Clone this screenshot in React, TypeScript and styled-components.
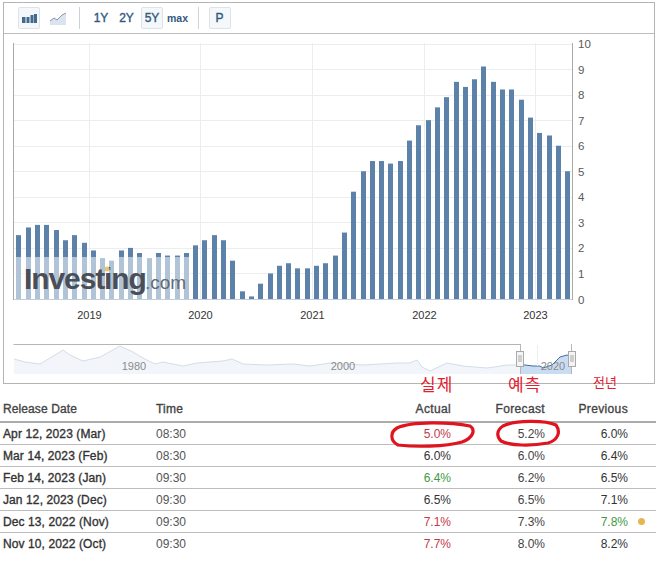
import React from "react";
import styled, { createGlobalStyle } from "styled-components";

const GlobalStyle = createGlobalStyle`
  html, body {
    margin: 0;
    padding: 0;
    background: #fff;
  }
  body {
    font-family: "Liberation Sans", Arial, sans-serif;
  }
`;

const values = [
  2.5, 2.8, 2.9, 2.9, 2.7, 2.3, 2.5, 2.2, 1.9, 1.6, 1.5, 1.9, 2.0, 1.8, 1.6,
  1.8, 1.7, 1.7, 1.8, 2.1, 2.3, 2.5, 2.3, 1.5, 0.3, 0.1, 0.6, 1.0, 1.3, 1.4,
  1.2, 1.2, 1.3, 1.4, 1.7, 2.6, 4.2, 5.0, 5.4, 5.4, 5.3, 5.4, 6.2, 6.8, 7.0,
  7.5, 7.9, 8.5, 8.3, 8.6, 9.1, 8.5, 8.2, 8.2, 7.8, 7.1, 6.5, 6.4, 6.0, 5.0,
];

const years = [
  { label: "2019", x: 89.5 },
  { label: "2020", x: 200.5 },
  { label: "2021", x: 312.5 },
  { label: "2022", x: 424.5 },
  { label: "2023", x: 535.5 },
];

const yFor = (v: number) => 299 - v * 25.55;

const rows = [
  { date: "Apr 12, 2023 (Mar)", time: "08:30", actual: "5.0%", actualTone: "bad", forecast: "5.2%", previous: "6.0%" },
  { date: "Mar 14, 2023 (Feb)", time: "08:30", actual: "6.0%", actualTone: "flat", forecast: "6.0%", previous: "6.4%" },
  { date: "Feb 14, 2023 (Jan)", time: "09:30", actual: "6.4%", actualTone: "good", forecast: "6.2%", previous: "6.5%" },
  { date: "Jan 12, 2023 (Dec)", time: "09:30", actual: "6.5%", actualTone: "flat", forecast: "6.5%", previous: "7.1%" },
  { date: "Dec 13, 2022 (Nov)", time: "09:30", actual: "7.1%", actualTone: "bad", forecast: "7.3%", previous: "7.8%", revised: true },
  { date: "Nov 10, 2022 (Oct)", time: "09:30", actual: "7.7%", actualTone: "bad", forecast: "8.0%", previous: "8.2%" },
];

const toneColor: Record<string, string> = {
  bad: "#c43a4a",
  good: "#3f9a3f",
  flat: "#333",
};

const Page = styled.div`
  position: relative;
  width: 656px;
  height: 562px;
  overflow: hidden;
  background: #fff;
`;

const Panel = styled.div`
  box-sizing: border-box;
  width: 652px;
  height: 382px;
  margin: 2px 0 0 3px;
  border: 1px solid #b4b4b4;
`;

const Toolbar = styled.div`
  box-sizing: border-box;
  height: 31px;
  padding: 4px 0 0 14px;
  display: flex;
  align-items: flex-start;
  border-bottom: 1px solid #bdbdbd;
`;

const ToolButton = styled.div<{ $active?: boolean; $small?: boolean }>`
  box-sizing: border-box;
  width: 22px;
  height: 22px;
  margin-right: ${({ $small }) => ($small ? "0" : "3.5px")};
  display: flex;
  align-items: center;
  justify-content: center;
  color: #34597f;
  font-size: ${({ $small }) => ($small ? "10.5px" : "12px")};
  font-weight: ${({ $small }) => ($small ? "700" : "400")};
  -webkit-text-stroke: ${({ $small }) => ($small ? "0" : "0.4px #34597f")};
  background: ${({ $active }) => ($active ? "#f5f8fb" : "transparent")};
  border: 1px solid ${({ $active }) => ($active ? "#dfe2e6" : "transparent")};
  border-radius: 2px;
`;

const IconButton = styled(ToolButton)`
  margin-right: 7px;
`;

const Divider = styled.div<{ $tight?: boolean }>`
  width: 1px;
  height: 22px;
  margin: 0 ${({ $tight }) => ($tight ? "10px" : "9.5px")} 0 ${({ $tight }) => ($tight ? "6.5px" : "9.5px")};
  background: #cfd2d6;
`;

const ChartSvg = styled.svg`
  display: block;
  width: 650px;
  height: 349px;
`;

const YLabel = styled.text`
  font-size: 11.5px;
  fill: #5a5a5a;
  dominant-baseline: central;
`;

const YearLabel = styled.text`
  font-size: 11px;
  fill: #333;
  text-anchor: middle;
  dominant-baseline: central;
`;

const NavLabel = styled.text`
  font-size: 11px;
  fill: #8b8b8b;
  text-anchor: middle;
  dominant-baseline: central;
`;

const MarkBold = styled.text`
  font-size: 30px;
  font-weight: 700;
  letter-spacing: -1.1px;
  fill: #4a4e57;
`;

const MarkLight = styled.text`
  font-size: 19px;
  fill: #666b74;
`;

const Table = styled.div`
  margin-top: 12px;
  font-size: 12px;
`;

const Row = styled.div<{ $head?: boolean }>`
  box-sizing: border-box;
  height: ${({ $head }) => ($head ? "27px" : "22px")};
  display: grid;
  grid-template-columns: 156px 200px 95px 94px 83px 28px;
  align-items: center;
  border-bottom: ${({ $head }) => ($head ? "2px solid #ababab" : "1px solid #bdbdbd")};

  &:last-child {
    border-bottom: none;
  }
`;

const DateCell = styled.div<{ $head?: boolean }>`
  padding-left: 3px;
  color: ${({ $head }) => ($head ? "#444" : "#333")};
  letter-spacing: 0.1px;
  -webkit-text-stroke: 0.35px ${({ $head }) => ($head ? "#444" : "#333")};
`;

const TimeCell = styled.div<{ $head?: boolean }>`
  color: ${({ $head }) => ($head ? "#444" : "#555")};
  letter-spacing: ${({ $head }) => ($head ? "0.2px" : "0")};
  -webkit-text-stroke: ${({ $head }) => ($head ? "0.35px #444" : "0")};
`;

const NumCell = styled.div<{ $color?: string; $head?: boolean }>`
  text-align: right;
  color: ${({ $color }) => $color || "#444"};
  letter-spacing: ${({ $head }) => ($head ? "0.35px" : "0")};
  -webkit-text-stroke: ${({ $head }) => ($head ? "0.35px #444" : "0")};
`;

const RevisedDot = styled.span`
  display: block;
  width: 7px;
  height: 7px;
  margin-left: 10px;
  border-radius: 50%;
  background: #e7b650;
`;

const Note = styled.div<{ $left: number; $small?: boolean }>`
  position: absolute;
  top: ${({ $small }) => ($small ? "370px" : "372px")};
  left: ${({ $left }) => $left}px;
  color: #e3202e;
  font-family: "Noto Sans CJK KR", sans-serif;
  font-size: ${({ $small }) => ($small ? "13px" : "17px")};
  line-height: 24px;
  letter-spacing: ${({ $small }) => ($small ? "0" : "1px")};
  white-space: nowrap;
`;

const Scribble = styled.svg`
  position: absolute;
  top: 416px;
  left: 386px;
  width: 180px;
  height: 36px;
  overflow: visible;
  pointer-events: none;
`;

const BarsIcon = () => (
  <svg width="15" height="9" viewBox="0 0 15 9">
    <path d="M0 3h3.500v6H0zM4.500 3h3v6h-3zM8.500 1h3v8h-3zM12 0h3v9h-3z" fill="#44698f" />
  </svg>
);

const AreaIcon = () => (
  <svg width="16" height="13" viewBox="0 0 16 13">
    <path d="M0 9l4-3 3 2 5-5 4-2v12H0z" fill="#dbe4ee" />
    <path d="M0 9l4-3 3 2 5-5 4-2" fill="none" stroke="#7f98b3" strokeWidth="1" />
  </svg>
);

const navLeft =
  "M14 359 L25 362 L40 364 L50 358 L63 350 L70 355 L83 361 L100 357 L120 346 L133 352 L143 358 L155 364 L163 362 L183 366 L197 363 L223 361 L232 359 L243 364 L267 365 L293 364 L310 366 L330 363 L345 364 L363 365 L397 363 L410 363 L417 360 L422 367 L430 371 L447 363 L463 366 L487 368 L507 365 L520 365";
const navRight =
  "M520 365 L525 365 L533 366 L540 366 L543 368 L552 365 L560 357 L567 355 L571.500 357";

const Chart = () => (
  <ChartSvg viewBox="4 34 650 349">
    {Array.from({ length: 11 }, (_, v) => (
      <line key={v} x1="14" x2="572" y1={Math.round(yFor(v)) + 0.5} y2={Math.round(yFor(v)) + 0.5} stroke="#ebedef" />
    ))}
    {years.map((y) => (
      <line key={y.label} x1={y.x} x2={y.x} y1="43" y2="299" stroke="#ebedef" />
    ))}
    {values.map((v, i) => (
      <rect
        key={i}
        x={Math.round(16.4 + i * 9.3)}
        y={yFor(v)}
        width="5"
        height={299 - yFor(v)}
        fill="#5c82a9"
      />
    ))}
    <line x1="14" x2="572" y1="299.500" y2="299.500" stroke="#c3cedb" />
    <line x1="13.500" x2="13.500" y1="43" y2="300" stroke="#aaa" />
    <line x1="572.500" x2="572.500" y1="43" y2="300" stroke="#aaa" />

    <rect x="14" y="257" width="178" height="42" fill="#fff" opacity="0.52" />
    <MarkBold x="24" y="288.500">Investing</MarkBold>
    <circle cx="107" cy="269" r="2.500" fill="#e9c468" />
    <MarkLight x="145" y="288.500">.com</MarkLight>

    {Array.from({ length: 11 }, (_, v) => (
      <YLabel key={v} x="578" y={yFor(v) + 0.5}>
        {v}
      </YLabel>
    ))}
    {years.map((y) => (
      <YearLabel key={y.label} x={y.x} y="315">
        {y.label}
      </YearLabel>
    ))}

    <path d={`${navLeft} L520 374 L14 374 Z`} fill="#f2f5fa" />
    <path d={navLeft} fill="none" stroke="#d5dde8" strokeWidth="1" />
    <path d={`${navRight} L571.500 374 L520 374 Z`} fill="#c9dcf2" />
    <path d={navRight} fill="none" stroke="#3f6f9f" strokeWidth="1" />
    <line x1="537.500" x2="537.500" y1="345" y2="366" stroke="#eceef0" />
    <line x1="13.500" x2="520.500" y1="344.500" y2="344.500" stroke="#b5b5b5" />
    <line x1="520.500" x2="520.500" y1="344" y2="374" stroke="#b5b5b5" />
    <line x1="571.500" x2="571.500" y1="344" y2="374" stroke="#b5b5b5" />
    <NavLabel x="134" y="366">1980</NavLabel>
    <NavLabel x="343" y="366">2000</NavLabel>
    <NavLabel x="553" y="366">2020</NavLabel>

    {[516, 568].map((x) => (
      <g key={x}>
        <rect x={x + 0.5} y="351.500" width="7" height="15" fill="#f4f4f4" stroke="#a9a9a9" />
        <path d={`M${x + 3} 355v7M${x + 5} 355v7`} stroke="#a9a9a9" fill="none" />
      </g>
    ))}
  </ChartSvg>
);

export default function App() {
  return (
    <Page>
      <GlobalStyle />
      <Panel>
        <Toolbar>
          <IconButton $active>
            <BarsIcon />
          </IconButton>
          <ToolButton>
            <AreaIcon />
          </ToolButton>
          <Divider $tight />
          <ToolButton>1Y</ToolButton>
          <ToolButton>2Y</ToolButton>
          <ToolButton $active>5Y</ToolButton>
          <ToolButton $small>max</ToolButton>
          <Divider />
          <ToolButton $active>P</ToolButton>
        </Toolbar>
        <Chart />
      </Panel>

      <Table>
        <Row $head>
          <DateCell $head>Release Date</DateCell>
          <TimeCell $head>Time</TimeCell>
          <NumCell $head>Actual</NumCell>
          <NumCell $head>Forecast</NumCell>
          <NumCell $head>Previous</NumCell>
        </Row>
        {rows.map((r) => (
          <Row key={r.date}>
            <DateCell>{r.date}</DateCell>
            <TimeCell>{r.time}</TimeCell>
            <NumCell $color={toneColor[r.actualTone]}>{r.actual}</NumCell>
            <NumCell>{r.forecast}</NumCell>
            <NumCell $color={r.revised ? "#3f9a3f" : "#333"}>{r.previous}</NumCell>
            {r.revised && <RevisedDot />}
          </Row>
        ))}
      </Table>

      <Note $left={420}>실제</Note>
      <Note $left={508}>예측</Note>
      <Note $left={593} $small>전년</Note>

      <Scribble viewBox="386 416 180 36">
        <path
          d="M397 428 C412 421 450 422 470 426 C476 430 473 438 462 442 C445 447 415 447 398 445 C390 441 390 432 397 428 Z"
          fill="none"
          stroke="#e0141f"
          strokeWidth="3.200"
        />
        <path
          d="M503 426 C515 420 545 420 556 425 C561 432 558 440 548 443 C532 446 510 446 501 441 C496 436 497 430 503 426 Z"
          fill="none"
          stroke="#e0141f"
          strokeWidth="3.200"
        />
      </Scribble>
    </Page>
  );
}
